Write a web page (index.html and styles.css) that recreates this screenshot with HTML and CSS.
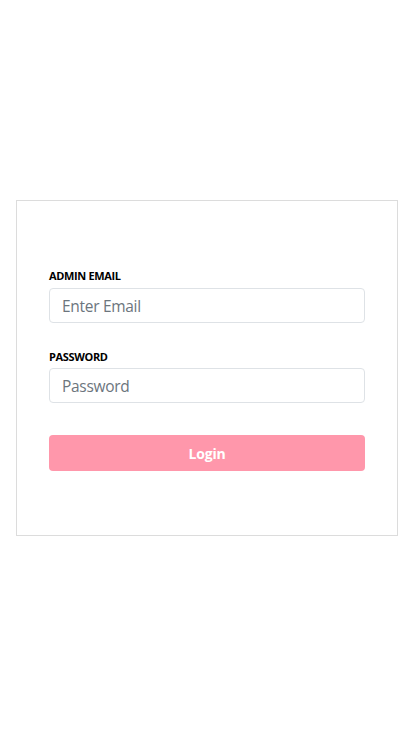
FILE: index.html
```
<!DOCTYPE html>
<html>
<head>
<meta charset="utf-8">
<link rel="stylesheet" href="styles.css">
</head>
<body>
<div class="card">
  <form class="form">
    <label class="label" for="email">ADMIN EMAIL</label>
    <input class="input" id="email" type="email" placeholder="Enter Email">
    <label class="label label-pw" for="pw">PASSWORD</label>
    <input class="input" id="pw" type="password" placeholder="Password">
    <button class="btn" type="button">Login</button>
  </form>
</div>
</body>
</html>
```
FILE: styles.css
```
html, body {
  margin: 0;
  padding: 0;
  background: #fff;
  font-family: "Open Sans", "Noto Sans", sans-serif;
}
.card {
  box-sizing: border-box;
  margin: 200px 0 0 16px;
  width: 382px;
  height: 336px;
  border: 1px solid #dcdcdc;
  padding: 65px 32px 64px;
}
.form {
  display: flex;
  flex-direction: column;
}
.label {
  display: block;
  height: 18px;
  line-height: 20px;
  font-size: 11px;
  font-weight: 700;
  color: #000;
  letter-spacing: -0.35px;
  margin-bottom: 4px;
}
.label-pw {
  margin-top: 24px;
  margin-bottom: 3px;
}
.input {
  box-sizing: border-box;
  height: 35px;
  width: 100%;
  border: 1px solid #dee2e6;
  border-radius: 4px;
  padding: 0 12px;
  font-family: inherit;
  font-size: 15.5px;
  letter-spacing: -0.3px;
  color: #495057;
  outline: none;
}
.input::placeholder {
  color: #6c757d;
}
.btn {
  margin-top: 32px;
  height: 36px;
  width: 100%;
  border: none;
  border-radius: 4px;
  background: #ff97ab;
  color: #fff;
  font-family: inherit;
  font-weight: 700;
  font-size: 14px;
  letter-spacing: -0.2px;
}
```
